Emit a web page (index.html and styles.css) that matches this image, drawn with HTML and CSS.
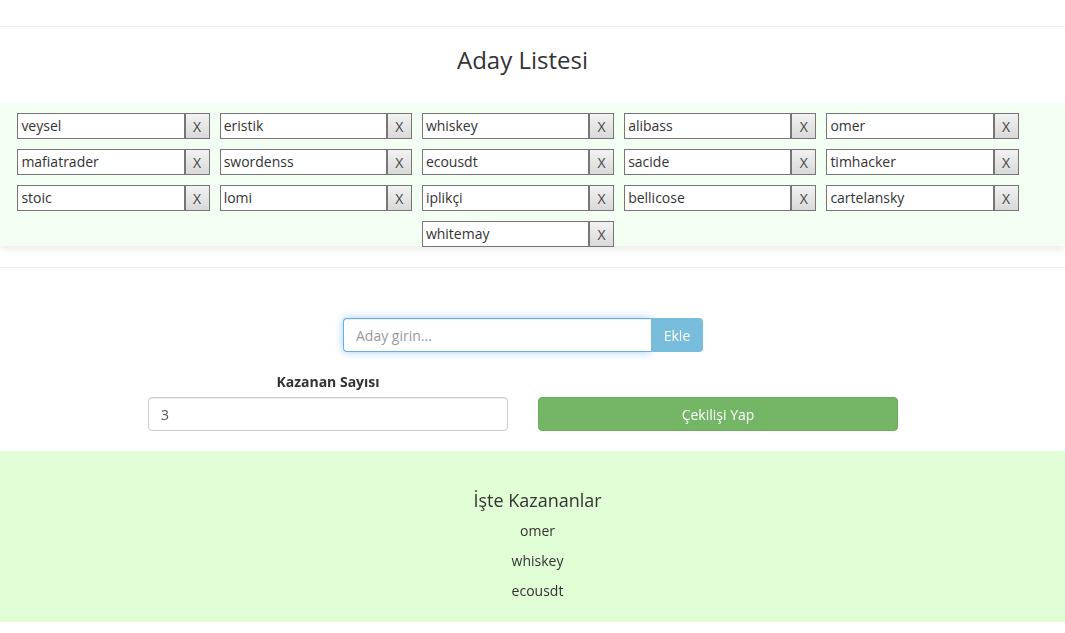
FILE: index.html
```html
<!DOCTYPE html>
<html lang="tr">
<head>
  <meta charset="UTF-8">
  <title>Çekiliş</title>
  <link rel="stylesheet" href="styles.css">
</head>
<body>

<hr class="top-line">

<h3 class="title">Aday Listesi</h3>

<div class="candidates">
  <div class="candidate"><input type="text" value="veysel"><button>X</button></div>
  <div class="candidate"><input type="text" value="eristik"><button>X</button></div>
  <div class="candidate"><input type="text" value="whiskey"><button>X</button></div>
  <div class="candidate"><input type="text" value="alibass"><button>X</button></div>
  <div class="candidate"><input type="text" value="omer"><button>X</button></div>
  <div class="candidate"><input type="text" value="mafiatrader"><button>X</button></div>
  <div class="candidate"><input type="text" value="swordenss"><button>X</button></div>
  <div class="candidate"><input type="text" value="ecousdt"><button>X</button></div>
  <div class="candidate"><input type="text" value="sacide"><button>X</button></div>
  <div class="candidate"><input type="text" value="timhacker"><button>X</button></div>
  <div class="candidate"><input type="text" value="stoic"><button>X</button></div>
  <div class="candidate"><input type="text" value="lomi"><button>X</button></div>
  <div class="candidate"><input type="text" value="iplikçi"><button>X</button></div>
  <div class="candidate"><input type="text" value="bellicose"><button>X</button></div>
  <div class="candidate"><input type="text" value="cartelansky"><button>X</button></div>
  <div class="candidate"><input type="text" value="whitemay"><button>X</button></div>
</div>

<hr class="mid-line">

<div class="add-group">
  <input type="text" class="add-input" placeholder="Aday girin..." autofocus>
  <button class="btn-add">Ekle</button>
</div>

<div class="draw-row">
  <div class="draw-col">
    <label class="draw-label">Kazanan Sayısı</label>
    <input type="text" class="count-input" value="3">
  </div>
  <div class="draw-col">
    <button class="btn-draw">Çekilişi Yap</button>
  </div>
</div>

<div class="winners">
  <h4>İşte Kazananlar</h4>
  <p>omer</p>
  <p>whiskey</p>
  <p>ecousdt</p>
</div>

</body>
</html>
```

FILE: styles.css
```css
body {
  margin: 0;
  font-family: 'Open Sans', 'Liberation Sans', sans-serif;
  font-size: 14px;
  line-height: 20px;
  color: #333;
  background: #fff;
}

hr {
  margin: 0;
  border: 0;
  border-top: 1px solid #eee;
}

.top-line {
  margin-top: 26px;
}

.title {
  margin: 20px 0 0 0;
  padding-left: 0;
  height: 56px;
  font-size: 24px;
  font-weight: 400;
  line-height: 26px;
  text-align: center;
  padding-right: 20px;
}

/* Candidate list */
.candidates {
  box-sizing: border-box;
  height: 143px;
  padding: 10px 46px 0 17px;
  background: #f3fff2;
  box-shadow: 0 4px 6px rgba(0, 0, 0, 0.07);
  display: flex;
  flex-wrap: wrap;
  justify-content: center;
  align-content: flex-start;
  column-gap: 10px;
  row-gap: 10px;
}

.candidate {
  display: flex;
  width: 192.25px;
  height: 26px;
}

.candidate input {
  box-sizing: border-box;
  flex: 1;
  min-width: 0;
  height: 26px;
  margin: 0;
  padding: 0 3px 2px 3px;
  border: 1px solid #767676;
  border-right-width: 2px;
  font-family: inherit;
  font-size: 14px;
  color: #333;
  background: #fff;
}

.candidate button {
  box-sizing: border-box;
  width: 24px;
  height: 26px;
  margin: 0;
  padding: 0;
  border: 1px solid #767676;
  border-left: 0;
  background: linear-gradient(#f2f2f2, #d9d9d9);
  font-family: inherit;
  font-size: 14px;
  color: #444;
}

.mid-line {
  margin-top: 21px;
}

/* Add candidate */
.add-group {
  display: flex;
  width: 360px;
  margin: 50px 0 0 343px;
  height: 34px;
}

.add-input {
  box-sizing: border-box;
  flex: 1;
  height: 34px;
  margin: 0;
  padding: 6px 12px;
  border: 1px solid #66afe9;
  border-right: 0;
  border-radius: 4px 0 0 4px;
  box-shadow: inset 0 1px 1px rgba(0, 0, 0, 0.075), 0 0 8px rgba(102, 175, 233, 0.6);
  font-family: inherit;
  font-size: 14px;
  color: #555;
  outline: none;
}

.add-input::placeholder {
  color: #999;
}

.btn-add {
  width: 52px;
  height: 34px;
  margin: 0;
  border: 0;
  border-radius: 0 4px 4px 0;
  background: #78bddc;
  color: #fff;
  font-family: inherit;
  font-size: 14px;
}

/* Draw */
.draw-row {
  display: flex;
  align-items: flex-end;
  gap: 30px;
  margin: 20px 0 0 148px;
}

.draw-col {
  display: flex;
  flex-direction: column;
  width: 360px;
}

.draw-label {
  display: block;
  margin-bottom: 5px;
  font-weight: 700;
  text-align: center;
}

.count-input {
  box-sizing: border-box;
  height: 34px;
  margin: 0;
  padding: 6px 12px;
  border: 1px solid #ccc;
  border-radius: 4px;
  box-shadow: inset 0 1px 1px rgba(0, 0, 0, 0.075);
  font-family: inherit;
  font-size: 14px;
  color: #555;
}

.btn-draw {
  height: 34px;
  margin: 0;
  border: 1px solid #6aab5c;
  border-radius: 4px;
  background: #74b666;
  color: #fff;
  font-family: inherit;
  font-size: 14px;
}

/* Winners */
.winners {
  margin-top: 20px;
  padding: 29px 0 1px 10px;
  height: 171px;
  box-sizing: border-box;
  background: #e0fdd6;
  box-shadow: 0 3px 5px rgba(0, 0, 0, 0.07);
  text-align: center;
}

.winners h4 {
  margin: 10px 0 11px 0;
  font-size: 18px;
  font-weight: 400;
  line-height: 20px;
}

.winners p {
  margin: 0 0 10px 0;
}
```
